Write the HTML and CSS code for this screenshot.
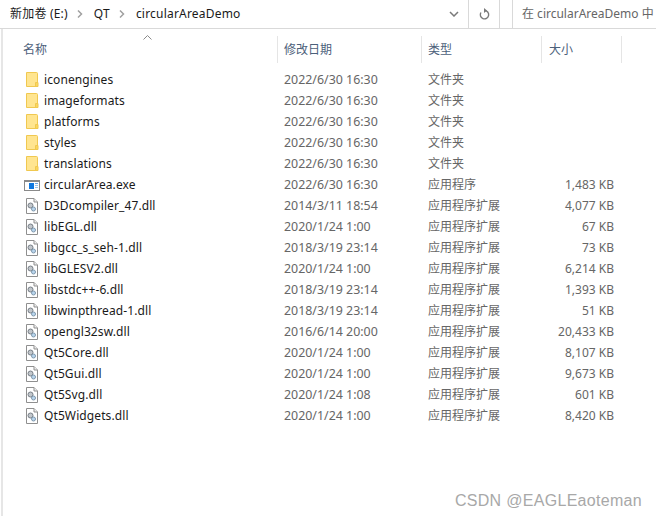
FILE: index.html
```html
<!DOCTYPE html>
<html lang="zh-CN">
<head>
  <meta charset="UTF-8">
  <title>circularAreaDemo</title>
  <link rel="stylesheet" href="styles.css">
</head>
<body>
  <svg class="sprites" width="0" height="0">
    <symbol id="folder" viewBox="0 0 16 16">
      <path d="M2.5 0.5h10a1 1 0 0 1 1 1v13h-11z" fill="#ffe590" stroke="#f0c850"/>
      <path d="M11.5 14.5v-4h2.5v4z" fill="#fbd75b" stroke="#f0c850"/>
    </symbol>
    <symbol id="exe" viewBox="0 0 16 16">
      <rect x="0.5" y="3.5" width="15" height="10" fill="#fff" stroke="#8a8a8a"/>
      <rect x="0" y="3" width="16" height="2" fill="#8a8a8a"/>
      <rect x="5" y="6" width="5" height="6" fill="#0f78e0"/>
      <rect x="11" y="6" width="3" height="1" fill="#6aa6e4"/>
      <rect x="11" y="8" width="3" height="1" fill="#9cc4ea"/>
      <rect x="11" y="10" width="3" height="1" fill="#9cc4ea"/>
    </symbol>
    <symbol id="dll" viewBox="0 0 16 16">
      <path d="M2.5 0.5h7.5l3.5 3.5v11.5h-11z" fill="#fff" stroke="#8f8f8f"/>
      <path d="M10 0.5v3.5h3.5" fill="#eee" stroke="#8f8f8f"/>
      <circle cx="6.5" cy="7.5" r="2.5" fill="#c2c7cc" stroke="#777e86"/>
      <circle cx="9.5" cy="11" r="2" fill="#b9d6ee" stroke="#7f98ad"/>
    </symbol>
  </svg>

  <header class="toolbar">
    <div class="address">
      <span class="crumb">新加卷 (E:)</span>
      <svg class="chev" width="6" height="8" viewBox="0 0 6 8"><path d="M1 0.5l3.5 3.5-3.5 3.5" fill="none" stroke="#a0a0a0" stroke-width="1.5"/></svg>
      <span class="crumb">QT</span>
      <svg class="chev" width="6" height="8" viewBox="0 0 6 8"><path d="M1 0.5l3.5 3.5-3.5 3.5" fill="none" stroke="#a0a0a0" stroke-width="1.5"/></svg>
      <span class="crumb">circularAreaDemo</span>
      <svg class="drop" width="10" height="6" viewBox="0 0 10 6"><path d="M1 1l4 4 4-4" fill="none" stroke="#7a7a7a" stroke-width="1.5"/></svg>
      <div class="refresh">
        <svg width="12" height="13" viewBox="0 0 12 13"><path d="M6.5 2.5a4.2 4.2 0 1 1-3.6 2" fill="none" stroke="#7a7a7a" stroke-width="1.4"/><path d="M6 0l3 2.5-3 2.5z" fill="#7a7a7a"/></svg>
      </div>
    </div>
    <div class="search">在 circularAreaDemo 中</div>
  </header>

  <main class="pane">
    <div class="heads">
      <div class="head c-name">名称<svg class="sort" width="9" height="5" viewBox="0 0 9 5"><path d="M0.5 4.5l4-4 4 4" fill="none" stroke="#8a8a8a"/></svg></div>
      <div class="head c-date">修改日期</div>
      <div class="head c-type">类型</div>
      <div class="head c-size">大小</div>
    </div>
    <div class="rows" id="rows"></div>
  </main>

  <div class="mark">CSDN @EAGLEaoteman</div>

  <script>
    const files = [
      ['folder', 'iconengines', '2022/6/30 16:30', '文件夹', ''],
      ['folder', 'imageformats', '2022/6/30 16:30', '文件夹', ''],
      ['folder', 'platforms', '2022/6/30 16:30', '文件夹', ''],
      ['folder', 'styles', '2022/6/30 16:30', '文件夹', ''],
      ['folder', 'translations', '2022/6/30 16:30', '文件夹', ''],
      ['exe', 'circularArea.exe', '2022/6/30 16:30', '应用程序', '1,483 KB'],
      ['dll', 'D3Dcompiler_47.dll', '2014/3/11 18:54', '应用程序扩展', '4,077 KB'],
      ['dll', 'libEGL.dll', '2020/1/24 1:00', '应用程序扩展', '67 KB'],
      ['dll', 'libgcc_s_seh-1.dll', '2018/3/19 23:14', '应用程序扩展', '73 KB'],
      ['dll', 'libGLESV2.dll', '2020/1/24 1:00', '应用程序扩展', '6,214 KB'],
      ['dll', 'libstdc++-6.dll', '2018/3/19 23:14', '应用程序扩展', '1,393 KB'],
      ['dll', 'libwinpthread-1.dll', '2018/3/19 23:14', '应用程序扩展', '51 KB'],
      ['dll', 'opengl32sw.dll', '2016/6/14 20:00', '应用程序扩展', '20,433 KB'],
      ['dll', 'Qt5Core.dll', '2020/1/24 1:00', '应用程序扩展', '8,107 KB'],
      ['dll', 'Qt5Gui.dll', '2020/1/24 1:00', '应用程序扩展', '9,673 KB'],
      ['dll', 'Qt5Svg.dll', '2020/1/24 1:08', '应用程序扩展', '601 KB'],
      ['dll', 'Qt5Widgets.dll', '2020/1/24 1:00', '应用程序扩展', '8,420 KB']
    ];

    const rows = document.getElementById('rows');
    rows.innerHTML = files.map(f => `
      <div class="row">
        <div class="c-name name"><svg class="icon"><use href="#${f[0]}"/></svg>${f[1]}</div>
        <div class="c-date">${f[2]}</div>
        <div class="c-type">${f[3]}</div>
        <div class="c-size size">${f[4]}</div>
      </div>`).join('');
  </script>
</body>
</html>
```

FILE: styles.css
```css
* {
  box-sizing: border-box;
}

body {
  margin: 0;
  width: 656px;
  height: 516px;
  overflow: hidden;
  background: #fff;
  position: relative;
  font-family: "Noto Sans", "Noto Sans CJK SC", sans-serif;
  font-size: 12px;
  color: #666;
}

.sprites {
  position: absolute;
}

.toolbar {
  display: flex;
  height: 29px;
  border-bottom: 1px solid #d9d9d9;
}

.address {
  width: 500px;
  display: flex;
  align-items: center;
  padding-left: 10px;
  border-right: 1px solid #d9d9d9;
  color: #1a1a1a;
}

.crumb {
  letter-spacing: 0.2px;
  margin-top: -2px;
}

.chev {
  margin: 0 11px 0 9px;
}

.drop {
  margin-left: auto;
  margin-right: 9px;
}

.refresh {
  width: 31px;
  height: 100%;
  border-left: 1px solid #d9d9d9;
  display: flex;
  align-items: center;
  justify-content: center;
}

.search {
  margin-left: 12px;
  flex: 1;
  border-left: 1px solid #d9d9d9;
  padding: 4px 0 0 9px;
  white-space: nowrap;
}

.pane {
  height: 487px;
  margin-left: 1px;
  padding-top: 7px;
  border-left: 2px solid #e6e6e6;
}

.heads {
  display: flex;
  height: 27px;
  margin-bottom: 6px;
}

.head {
  height: 27px;
  line-height: 27px;
  padding-left: 6px;
  border-right: 1px solid #e5e5e5;
  color: #4c607a;
  position: relative;
}

.sort {
  position: absolute;
  left: 140px;
  top: -1px;
}

.head.c-name {
  padding-left: 20px;
}

.head.c-size {
  padding-left: 7px;
}

.c-name {
  width: 275px;
}

.c-date {
  width: 144px;
}

.c-type {
  width: 120px;
}

.c-size {
  width: 80px;
}

.row {
  display: flex;
  height: 21px;
  line-height: 21px;
  white-space: nowrap;
}

.row .c-date,
.row .c-type {
  padding-left: 6px;
}

.row .c-date {
  font-size: 12.4px;
}

.name {
  display: flex;
  align-items: center;
  color: #1a1a1a;
  padding-left: 21px;
  letter-spacing: 0.1px;
}

.icon {
  width: 16px;
  height: 16px;
  margin-right: 4px;
  flex: none;
}

.size {
  text-align: right;
  padding-right: 8px;
}

.mark {
  position: absolute;
  right: 14px;
  bottom: 6px;
  font-family: "Liberation Sans", sans-serif;
  font-size: 16px;
  letter-spacing: 0.3px;
  color: #a8a8a8;
}
```
